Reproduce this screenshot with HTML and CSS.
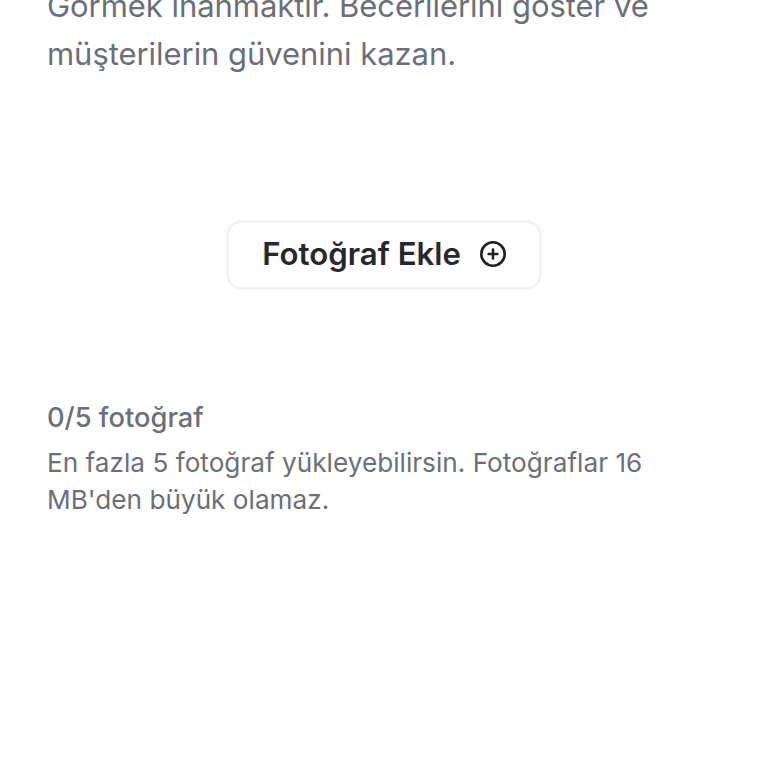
FILE: index.html
```html
<!DOCTYPE html>
<html lang="tr">
<head>
  <meta charset="UTF-8" />
  <title>Fotoğraf Ekle</title>
  <link rel="stylesheet" href="styles.css">
</head>
<body>
  <div class="container">
    <p class="intro">Görmek inanmaktır. Becerilerini göster ve müşterilerin güvenini kazan.</p>

    <div class="upload">
      <button class="add-btn">
        Fotoğraf Ekle
        <svg width="26" height="26" viewBox="0 0 26 26" fill="none" stroke="#1f2124" stroke-width="2.6" stroke-linecap="round">
          <circle cx="13" cy="13" r="11.7"/>
          <path d="M13 8.6v8.8M8.6 13h8.8"/>
        </svg>
      </button>
    </div>

    <div class="count">0/5 fotoğraf</div>
    <p class="hint">En fazla 5 fotoğraf yükleyebilirsin. Fotoğraflar 16 MB'den büyük olamaz.</p>
  </div>
</body>
</html>
```

FILE: styles.css
```css
html, body {
  margin: 0;
  padding: 0;
  height: 768px;
  overflow: hidden;
  background: #fff;
}
body {
  font-family: Inter, "Noto Sans", sans-serif;
  color: #6b7078;
}
.container {
  padding: 0 47px;
  margin-top: -18px;
}
.intro {
  margin: 0;
  font-size: 31px;
  line-height: 48px;
  letter-spacing: -0.05px;
}
.upload {
  display: flex;
  justify-content: center;
  margin-top: 142px;
}
.add-btn {
  display: flex;
  align-items: center;
  justify-content: center;
  gap: 19px;
  width: 316px;
  height: 70px;
  padding: 0 0 2px;
  background: #fff;
  border: 3px solid #f3f3f4;
  border-radius: 16px;
  font-family: inherit;
  font-size: 31.2px;
  font-weight: 600;
  color: #26282b;
}
.count {
  margin-top: 110px;
  font-size: 27.3px;
  font-weight: 500;
  line-height: 36px;
}
.hint {
  margin: 8px 0 0;
  font-size: 26.2px;
  line-height: 37px;
}
```
